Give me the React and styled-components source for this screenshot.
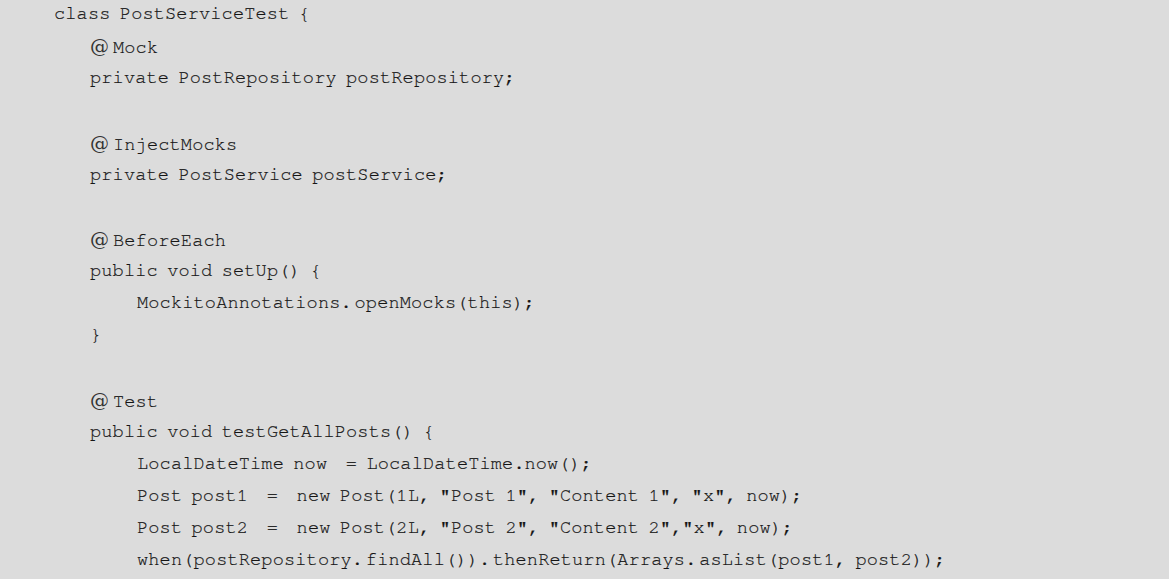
import React from 'react';
import styled, { createGlobalStyle } from 'styled-components';

const GlobalStyle = createGlobalStyle`
  html, body {
    margin: 0;
    padding: 0;
    background: #ffffff;
  }
`;

const CodeBlock = styled.div`
  width: 1169px;
  height: 579px;
  background: #dcdcdc;
  overflow: hidden;
  font-family: "Nimbus Mono PS", "FreeMono", "Courier", "Liberation Mono", monospace;
  font-size: 18.6px;
  line-height: 32.15px;
  letter-spacing: 0.15px;
  word-spacing: -2px;
  color: #151515;
  -webkit-text-stroke: 0.2px #151515;
`;

const Lines = styled.div`
  margin-top: -2px;
`;

const Line = styled.div`
  height: 32.15px;
  white-space: pre;
  padding-left: ${({ $indent }) => [54, 90, 137][$indent]}px;
`;

const At = styled.span`
  display: inline-block;
  width: 23px;
  font-family: "DejaVu Serif", "Liberation Serif", serif;
  font-size: 19px;
  font-weight: 300;
  color: #333;
  -webkit-text-stroke: 0;
`;

const Dot = styled.span`
  display: inline-block;
  width: ${({ $w }) => $w}px;
`;

const code = [
  [0, 'class PostServiceTest {'],
  [1, '@Mock'],
  [1, 'private PostRepository postRepository;'],
  [1, ''],
  [1, '@InjectMocks'],
  [1, 'private PostService postService;'],
  [1, ''],
  [1, '@BeforeEach'],
  [1, 'public void setUp() {'],
  [2, 'MockitoAnnotations.openMocks(this);'],
  [1, '}'],
  [1, ''],
  [1, '@Test'],
  [1, 'public void testGetAllPosts() {'],
  [2, 'LocalDateTime now  = LocalDateTime.now();', 11],
  [2, 'Post post1  =  new Post(1L, "Post 1", "Content 1", "x", now);'],
  [2, 'Post post2  =  new Post(2L, "Post 2", "Content 2","x", now);'],
  [2, 'when(postRepository.findAll()).thenReturn(Arrays.asList(post1, post2));'],
];

const renderText = (text, dot = 14) =>
  text.split('.').flatMap((part, i) =>
    i === 0 ? [part] : [<Dot key={i} $w={dot}>.</Dot>, part]
  );

const App = () => {
  return (
    <>
      <GlobalStyle />
      <CodeBlock>
        <Lines>
          {code.map(([indent, text, dot], i) => (
            <Line key={i} $indent={indent}>
              {text.startsWith('@') ? (
                <>
                  <At>@</At>
                  {text.slice(1)}
                </>
              ) : (
                renderText(text, dot)
              )}
            </Line>
          ))}
        </Lines>
      </CodeBlock>
    </>
  );
};

export default App;
